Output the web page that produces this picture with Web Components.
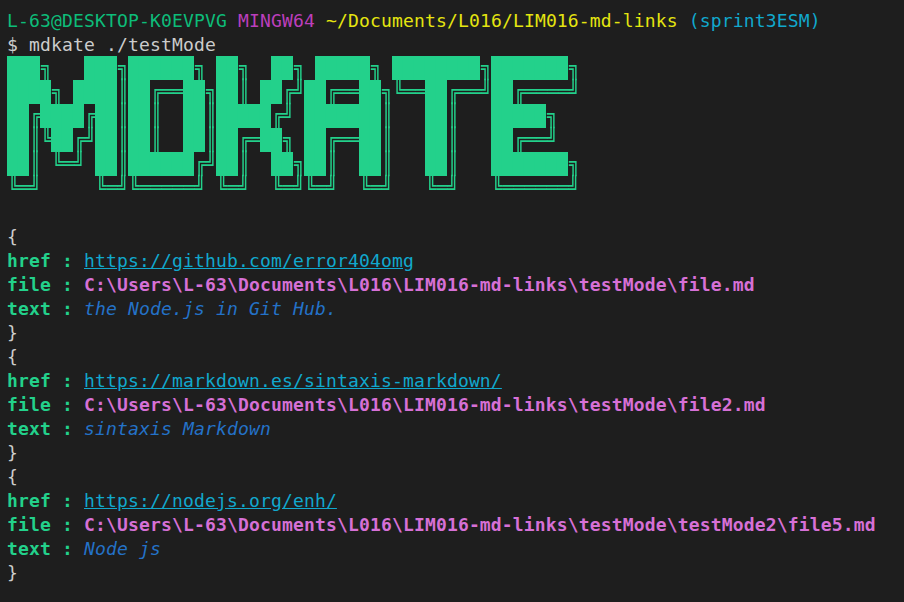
<!DOCTYPE html>
<html lang="en">
<head>
<meta charset="utf-8">
<title>mdkate</title>
<style>
  html, body { margin: 0; background: #1e1e1e; }
</style>
</head>
<body>
<term-screen>
  <prompt-line user="L-63@DESKTOP-K0EVPVG" shell="MINGW64" path="~/Documents/L016/LIM016-md-links" branch="(sprint3ESM)"></prompt-line>
  <term-line>$ mdkate ./testMode</term-line>
  <mdkate-banner></mdkate-banner>
  <term-line>&nbsp;</term-line>
  <link-entry>
    <span slot="href">https://github.com/error404omg</span>
    <span slot="file">C:\Users\L-63\Documents\L016\LIM016-md-links\testMode\file.md</span>
    <span slot="text">the Node.js in Git Hub.</span>
  </link-entry>
  <link-entry>
    <span slot="href">https://markdown.es/sintaxis-markdown/</span>
    <span slot="file">C:\Users\L-63\Documents\L016\LIM016-md-links\testMode\file2.md</span>
    <span slot="text">sintaxis Markdown</span>
  </link-entry>
  <link-entry>
    <span slot="href">https://nodejs.org/enh/</span>
    <span slot="file">C:\Users\L-63\Documents\L016\LIM016-md-links\testMode\testMode2\file5.md</span>
    <span slot="text">Node js</span>
  </link-entry>
</term-screen>

<script>
const BANNER = [
  '███╗   ███╗██████╗ ██╗  ██╗ █████╗ ████████╗███████╗',
  '████╗ ████║██╔══██╗██║ ██╔╝██╔══██╗╚══██╔══╝██╔════╝',
  '██╔████╔██║██║  ██║█████╔╝ ███████║   ██║   █████╗  ',
  '██║╚██╔╝██║██║  ██║██╔═██╗ ██╔══██║   ██║   ██╔══╝  ',
  '██║ ╚═╝ ██║██████╔╝██║  ██╗██║  ██║   ██║   ███████╗',
  '╚═╝     ╚═╝╚═════╝ ╚═╝  ╚═╝╚═╝  ╚═╝   ╚═╝   ╚══════╝'
];

class TermScreen extends HTMLElement {
  connectedCallback() {
    this.attachShadow({ mode: 'open' });
    this.shadowRoot.innerHTML = `
      <style>
        :host {
          display: flex;
          flex-direction: column;
          height: 602px;
          box-sizing: border-box;
          padding: 8px 0 0 7px;
          overflow: hidden;
          background: #1e1e1e;
          color: #cccccc;
          font-family: "DejaVu Sans Mono", monospace;
          font-size: 18px;
          letter-spacing: 0.16px;
          line-height: 26px;
        }
      </style>
      <slot></slot>
    `;
  }
}

class TermLine extends HTMLElement {
  connectedCallback() {
    this.attachShadow({ mode: 'open' });
    this.shadowRoot.innerHTML = `
      <style>
        :host { display: block; height: 24px; white-space: nowrap; }
      </style>
      <slot></slot>
    `;
  }
}

class PromptLine extends HTMLElement {
  connectedCallback() {
    this.attachShadow({ mode: 'open' });
    this.shadowRoot.innerHTML = `
      <style>
        :host { display: block; height: 24px; white-space: nowrap; }
        .user { color: #0dbc79; }
        .shell { color: #bc3fbc; }
        .path { color: #e5e510; }
        .branch { color: #11a8cd; }
      </style>
      <span class="user">${this.getAttribute('user')}</span> <span class="shell">${this.getAttribute('shell')}</span> <span class="path">${this.getAttribute('path')}</span> <span class="branch">${this.getAttribute('branch')}</span>
    `;
  }
}

class MdkateBanner extends HTMLElement {
  connectedCallback() {
    this.attachShadow({ mode: 'open' });
    // solid runs get a background so the block glyphs leave no seams
    const rows = BANNER.map(row =>
      '<div class="row">' + row.replace(/█+|[^█]+/g, m => m[0] === '█'
        ? `<span class="solid" style="width:${m.length * 11}px">${m}</span>`
        : `<span class="box">${m}</span>`
      ) + '</div>'
    ).join('');
    this.shadowRoot.innerHTML = `
      <style>
        :host { display: block; height: 144px; }
        .art {
          color: #23d18b;
          font: 18.27px/20px "DejaVu Sans Mono", monospace;
          letter-spacing: 0;
          transform: scaleY(1.2);
          transform-origin: 0 0;
        }
        .row { height: 20px; white-space: pre; }
        .solid, .box {
          display: inline-block;
          height: 20px;
          vertical-align: top;
        }
        .solid { overflow: hidden; background: #23d18b; }
        .box { transform: translate(0.9px, -0.4px); }
      </style>
      <div class="art">${rows}</div>
    `;
  }
}

class LinkEntry extends HTMLElement {
  connectedCallback() {
    this.attachShadow({ mode: 'open' });
    this.shadowRoot.innerHTML = `
      <style>
        :host { display: block; }
        div { height: 24px; white-space: nowrap; }
        b { color: #23d18b; font-weight: 700; }
        .href { color: #11a8cd; text-decoration: underline; }
        .file { color: #d670d6; font-weight: 700; }
        .text { color: #2472c8; font-style: italic; }
      </style>
      <div>{</div>
      <div><b>href : </b><span class="href"><slot name="href"></slot></span></div>
      <div><b>file : </b><span class="file"><slot name="file"></slot></span></div>
      <div><b>text : </b><span class="text"><slot name="text"></slot></span></div>
      <div>}</div>
    `;
  }
}

customElements.define('term-screen', TermScreen);
customElements.define('term-line', TermLine);
customElements.define('prompt-line', PromptLine);
customElements.define('mdkate-banner', MdkateBanner);
customElements.define('link-entry', LinkEntry);
</script>
</body>
</html>
